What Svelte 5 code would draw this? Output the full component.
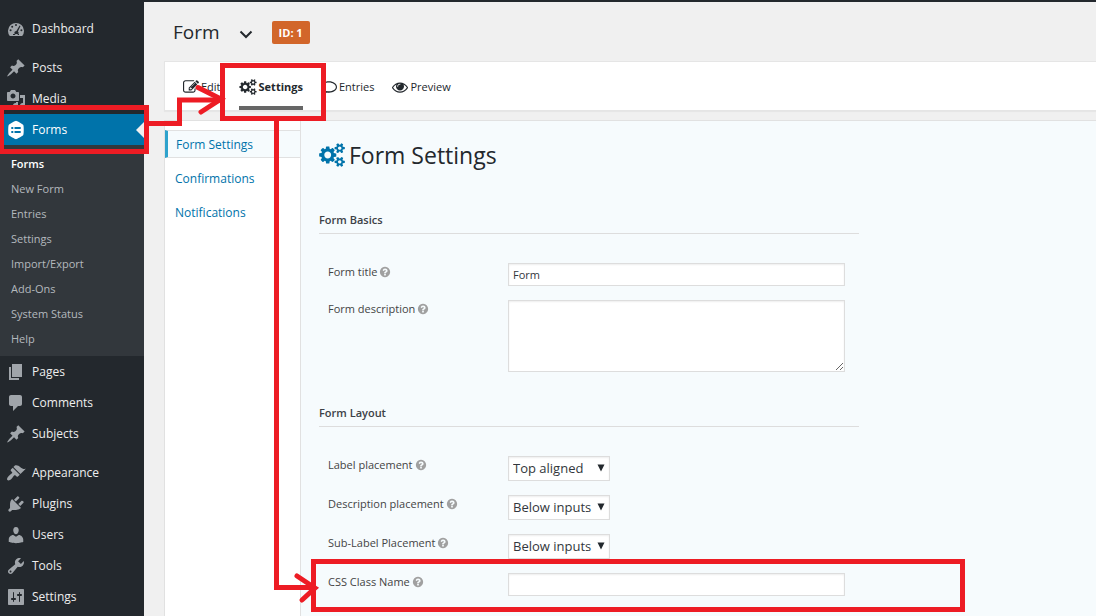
<script>
  const dash = {
    dashboard: 'M3.8 17h12.4A8 8 0 1 0 3.8 17zM10 5a1 1 0 1 1 0 2 1 1 0 0 1 0-2zM6.2 6.7a1 1 0 1 1 0 2 1 1 0 0 1 0-2zM4.6 10.3a1 1 0 1 1 0 2 1 1 0 0 1 0-2zM15.4 10.3a1 1 0 1 1 0 2 1 1 0 0 1 0-2zM13.6 6.4l.9.5-2.6 5.6a2 2 0 1 1-1.5-.6zM7 15h6v.9H7z',
    pin: 'M10.44 3.02l1.82-1.82 6.36 6.35-1.83 1.82c-1.05-.68-2.48-.57-3.41.36l-.75.75c-.92.93-1.04 2.35-.35 3.41l-1.83 1.82-2.41-2.41-2.8 2.79c-.42.42-3.38 2.71-3.8 2.29s1.86-3.39 2.28-3.81l2.79-2.79L4.1 9.36l1.83-1.82c1.05.69 2.48.57 3.4-.36l.75-.75c.93-.92 1.05-2.35.36-3.41z',
    media: 'M13 11V4c0-.55-.45-1-1-1h-1.67L9 1H5L3.67 3H2c-.55 0-1 .45-1 1v7c0 .55.45 1 1 1h10c.55 0 1-.45 1-1zM7 4.5c1.38 0 2.5 1.12 2.5 2.5S8.38 9.5 7 9.5 4.5 8.38 4.5 7 5.62 4.5 7 4.5zM14 6h5v10.5c0 1.38-1.12 2.5-2.5 2.5S14 17.88 14 16.5s1.12-2.5 2.5-2.5c.17 0 .34.02.5.05V9h-3V6zm-4 8.05V13h2v3.5c0 1.38-1.12 2.5-2.5 2.5S7 17.88 7 16.5 8.12 14 9.5 14c.17 0 .34.02.5.05z',
    forms: 'M10 .8c.6 0 6.8 3.4 7.3 4.2.6.9.6 9.1 0 10-.5.8-6.7 4.2-7.3 4.2s-6.8-3.4-7.3-4.2c-.6-.9-.6-9.1 0-10C3.2 4.2 9.4.8 10 .8zM5.3 7v2h2V7zm3.2 0v2h6.2V7zM5.3 11v2h2v-2zm3.2 0v2h6.2v-2z',
    pages: 'M6 15V2h10v13H6zm-1 1h8v2H3V5h2v11z',
    comments: 'M5 2h9c1.1 0 2 .9 2 2v7c0 1.1-.9 2-2 2h-2l-5 5v-5H5c-1.1 0-2-.9-2-2V4c0-1.1.9-2 2-2z',
    brush: 'M14.48 11.06L7.41 3.99l1.5-1.5c.5-.56 2.3-.47 3.51.32 1.21.8 1.43 1.28 2.91 2.1 1.18.64 2.45 1.26 4.45.85zm-.71.71L6.7 4.7 4.93 6.47c-.39.39-.39 1.02 0 1.41l1.06 1.06c.39.39.39 1.03 0 1.42-.6.6-1.43 1.11-2.21 1.69-.35.26-.7.53-1.01.84C1.43 14.23.4 16.08 1.4 17.07c.99 1 2.84-.03 4.18-1.36.31-.31.58-.66.85-1.02.57-.78 1.08-1.61 1.69-2.21.39-.39 1.02-.39 1.41 0l1.06 1.06c.39.39 1.02.39 1.41 0z',
    plug: 'M13.11 4.36L9.87 7.6 8 5.73l3.24-3.24c.35-.34 1.05-.2 1.56.32.52.51.66 1.21.31 1.55zm-8 1.77l.91-1.12 9.01 9.01-1.19.84c-.71.71-2.63 1.16-3.82 1.16H6.14L4.9 17.26c-.59.59-1.54.59-2.12 0-.59-.58-.59-1.53 0-2.12l1.24-1.24v-3.88c0-1.13.4-3.19 1.09-3.89zm7.26 3.97l3.24-3.24c.34-.35 1.04-.21 1.55.31.52.51.66 1.21.31 1.55l-3.24 3.25z',
    user: 'M10 9.25c-2.27 0-2.73-3.44-2.73-3.44C7 4.02 7.82 2 9.97 2c2.16 0 2.98 2.02 2.71 3.81 0 0-.41 3.44-2.68 3.44zm0 2.57L12.72 10c2.39 0 4.52 2.33 4.52 4.53v2.49s-3.65 1.13-7.24 1.13c-3.65 0-7.24-1.13-7.24-1.13v-2.49c0-2.25 1.94-4.48 4.47-4.48z',
    wrench: 'M16.68 9.77c-1.34 1.34-3.3 1.67-4.95.99l-5.41 6.52c-.99.99-2.59.99-3.58 0s-.99-2.59 0-3.57l6.52-5.42c-.68-1.65-.35-3.61.99-4.95 1.28-1.28 3.12-1.62 4.72-1.06l-2.89 2.89 2.82 2.82 2.86-2.87c.53 1.58.18 3.39-1.08 4.65zM3.81 16.21c.4.39 1.04.39 1.43 0 .4-.4.4-1.04 0-1.43-.39-.4-1.03-.4-1.43 0-.39.39-.39 1.03 0 1.43z',
    sliders: 'M18 17V3c0-.6-.4-1-1-1H3c-.6 0-1 .4-1 1v14c0 .6.4 1 1 1h14c.6 0 1-.4 1-1zM8 11h1c.55 0 1 .45 1 1s-.45 1-1 1H8v1.5c0 .28-.22.5-.5.5s-.5-.22-.5-.5V13H6c-.55 0-1-.45-1-1s.45-1 1-1h1V5.5c0-.28.22-.5.5-.5s.5.22.5.5V11zm5-2h-1c-.55 0-1-.45-1-1s.45-1 1-1h1V5.5c0-.28.22-.5.5-.5s.5.22.5.5V7h1c.55 0 1 .45 1 1s-.45 1-1 1h-1v5.5c0 .28-.22.5-.5.5s-.5-.22-.5-.5V9z'
  };

  const cogs =
    'M896 896q0-106-75-181t-181-75-181 75-75 181 75 181 181 75 181-75 75-181zm768 512q0-52-38-90t-90-38-90 38-38 90q0 53 37.5 90.5t90.5 37.5 90.5-37.5 37.5-90.5zm0-1024q0-52-38-90t-90-38-90 38-38 90q0 53 37.5 90.5t90.5 37.5 90.5-37.5 37.5-90.5zm-384 421v185q0 10-7 19.5t-16 10.5l-155 24q-11 35-32 76 34 48 90 115 7 11 7 20 0 12-7 19-23 30-82.5 89.5t-78.5 59.5q-11 0-21-7l-115-90q-37 19-77 31-11 108-23 155-7 24-30 24h-186q-11 0-20-7.5t-10-17.5l-23-153q-34-10-75-31l-118 89q-7 7-20 7-11 0-21-8-144-133-144-160 0-9 7-19 10-14 41-53t47-61q-23-44-35-82l-152-24q-10-1-17-9.5t-7-19.5v-185q0-10 7-19.5t16-10.5l155-24q11-35 32-76-34-48-90-115-7-11-7-20 0-12 7-20 22-30 82-89t79-59q11 0 21 7l115 90q34-18 77-32 11-108 23-154 7-24 30-24h186q11 0 20 7.5t10 17.5l23 153q34 10 75 31l118-89q8-7 20-7 11 0 21 8 144 133 144 160 0 8-7 19-12 16-42 54t-45 60q23 48 34 82l152 23q10 2 17 10.5t7 19.5zm640 533v140q0 16-149 31-12 27-30 52 51 113 51 138 0 4-4 7-122 71-124 71-8 0-46-47t-52-68q-20 2-30 2t-30-2q-14 21-52 68t-46 47q-2 0-124-71-4-3-4-7 0-25 51-138-18-25-30-52-149-15-149-31v-140q0-16 149-31 13-29 30-52-51-113-51-138 0-4 4-7 4-2 35-20t59-34 30-16q8 0 46 46.5t52 67.5q20-2 30-2t30 2q51-71 92-112l6-2q4 0 124 70 4 3 4 7 0 25-51 138 17 23 30 52 149 15 149 31zm0-1024v140q0 16-149 31-12 27-30 52 51 113 51 138 0 4-4 7-122 71-124 71-8 0-46-47t-52-68q-20 2-30 2t-30-2q-14 21-52 68t-46 47q-2 0-124-71-4-3-4-7 0-25 51-138-18-25-30-52-149-15-149-31v-140q0-16 149-31 13-29 30-52-51-113-51-138 0-4 4-7 4-2 35-20t59-34 30-16q8 0 46 46.5t52 67.5q20-2 30-2t30 2q51-71 92-112l6-2q4 0 124 70 4 3 4 7 0 25-51 138 17 23 30 52 149 15 149 31z';

  const tabIcons = {
    edit: 'M888 1184l116-116-152-152-116 116v56h96v96h56zm440-720q-16-16-33 1l-350 350q-17 17-1 33t33-1l350-350q17-17 1-33zm80 594v190q0 119-84.5 203.5t-203.5 84.5h-832q-119 0-203.5-84.5t-84.5-203.5v-832q0-119 84.5-203.5t203.5-84.5h832q63 0 117 25 15 7 18 23 3 17-9 29l-49 49q-14 14-32 8-23-6-45-6h-832q-66 0-113 47t-47 113v832q0 66 47 113t113 47h832q66 0 113-47t47-113v-126q0-13 9-22l64-64q15-15 35-7t20 29zm-96-738l288 288-672 672h-288v-288zm444 132l-92 92-288-288 92-92q28-28 68-28t68 28l152 152q28 28 28 68t-28 68z',
    cogs,
    comment: 'M896 384C470 384 128 600 128 896c0 150 90 285 240 380-10 90-50 170-120 240 150-30 270-90 370-170 88 20 180 30 278 30 426 0 768-216 768-480S1322 384 896 384zm0-128c495 0 896 287 896 640s-401 640-896 640c-82 0-162-8-238-22-165 120-340 170-520 190 90-110 140-200 150-310C105 1275 0 1095 0 896c0-353 401-640 896-640z',
    eye: 'M1664 960q-152-236-381-353 61 104 61 225 0 185-131.5 316.5t-316.5 131.5-316.5-131.5-131.5-316.5q0-121 61-225-229 117-381 353 133 205 333.5 326.5t434.5 121.5 434.5-121.5 333.5-326.5zm-720-384q0-20-14-34t-34-14q-125 0-214.5 89.5t-89.5 214.5q0 20 14 34t34 14 34-14 14-34q0-86 61-147t147-61q20 0 34-14t14-34zm848 384q0 34-20 69-140 230-376.5 368.5t-499.5 138.5-499.5-139-376.5-368q-20-35-20-69t20-69q140-229 376.5-368t499.5-139 499.5 139 376.5 368q20 35 20 69z'
  };

  const help =
    'M1024 1376v-192q0-14-9-23t-23-9h-192q-14 0-23 9t-9 23v192q0 14 9 23t23 9h192q14 0 23-9t9-23zm256-672q0-88-55.5-163t-138.5-116-170-41q-243 0-371 213-15 24 8 42l132 100q7 6 19 6 16 0 25-12 53-68 86-92 34-24 86-24 48 0 85.5 26t37.5 59q0 38-20 61t-68 45q-63 28-115.5 86.5t-52.5 125.5v36q0 14 9 23t23 9h192q14 0 23-9t9-23q0-19 21.5-49.5t54.5-49.5q32-18 49-28.5t46-35 44.5-48 28-60.5 12.5-81zm384 192q0 209-103 385.5t-279.5 279.5-385.5 103-385.5-103-279.5-279.5-103-385.5 103-385.5 279.5-279.5 385.5-103 385.5 103 279.5 279.5 103 385.5z';

  const groups = [
    [{ label: 'Dashboard', icon: 'dashboard' }],
    [
      { label: 'Posts', icon: 'pin' },
      { label: 'Media', icon: 'media' },
      {
        label: 'Forms',
        icon: 'forms',
        children: ['Forms', 'New Form', 'Entries', 'Settings', 'Import/Export', 'Add-Ons', 'System Status', 'Help']
      },
      { label: 'Pages', icon: 'pages' },
      { label: 'Comments', icon: 'comments' },
      { label: 'Subjects', icon: 'pin' }
    ],
    [
      { label: 'Appearance', icon: 'brush' },
      { label: 'Plugins', icon: 'plug' },
      { label: 'Users', icon: 'user' },
      { label: 'Tools', icon: 'wrench' },
      { label: 'Settings', icon: 'sliders' }
    ]
  ];

  const tabs = [
    { label: 'Edit', icon: 'edit' },
    { label: 'Settings', icon: 'cogs', active: true },
    { label: 'Entries', icon: 'comment' },
    { label: 'Preview', icon: 'eye' }
  ];

  const sections = ['Form Settings', 'Confirmations', 'Notifications'];

  const placements = [
    { id: 'label-placement', label: 'Label placement', options: ['Top aligned', 'Left aligned'] },
    { id: 'description-placement', label: 'Description placement', options: ['Below inputs', 'Above inputs'] },
    { id: 'sublabel-placement', label: 'Sub-Label Placement', options: ['Below inputs', 'Above inputs'] }
  ];

  let title = $state('Form');
  let description = $state('');
  let cssClass = $state('');
</script>

{#snippet fieldLabel(id, text)}
  <label for={id}>
    {text}
    <svg viewBox="0 0 1792 1792" aria-hidden="true"><path d={help} /></svg>
  </label>
{/snippet}

<div class="page">
  <nav class="sidebar" aria-label="Main menu">
    {#each groups as group}
      <ul>
        {#each group as item}
          <li>
            <a class="item" class:current={item.children} href="#top">
              <svg viewBox="0 0 20 20" aria-hidden="true"><path fill-rule="evenodd" d={dash[item.icon]} /></svg>
              {item.label}
            </a>
            {#if item.children}
              <ul class="submenu">
                {#each item.children as child, i}
                  <li><a href="#top" class:chosen={i === 0}>{child}</a></li>
                {/each}
              </ul>
            {/if}
          </li>
        {/each}
      </ul>
    {/each}
  </nav>

  <main>
    <header>
      <h1>Form</h1>
      <button class="switcher" aria-label="Switch form">
        <svg viewBox="0 0 14 9" aria-hidden="true"><path d="M1.5 1.5 7 7l5.500-5.500" /></svg>
      </button>
      <span class="badge">ID: 1</span>
    </header>

    <nav class="toolbar" aria-label="Form">
      {#each tabs as tab}
        <a href="#top" class:active={tab.active}>
          <svg class:wide={tab.icon === 'cogs'} viewBox={tab.icon === 'cogs' ? '0 0 1920 1792' : '0 0 1792 1792'} aria-hidden="true">
            <path d={tabIcons[tab.icon]} fill-rule={tab.icon === 'comment' ? 'evenodd' : 'nonzero'} />
          </svg>
          {tab.label}
        </a>
      {/each}
    </nav>

    <div class="panel">
      <nav class="sections" aria-label="Form settings">
        {#each sections as name, i}
          <a href="#top" class:active={i === 0}>{name}</a>
        {/each}
      </nav>

      <form class="settings">
        <h2>
          <svg viewBox="0 0 1920 1792" aria-hidden="true"><path d={cogs} /></svg>
          Form Settings
        </h2>

        <section>
          <h3>Form Basics</h3>
          <div class="row">
            {@render fieldLabel('form-title', 'Form title')}
            <input id="form-title" type="text" bind:value={title} />
          </div>
          <div class="row">
            {@render fieldLabel('form-description', 'Form description')}
            <textarea id="form-description" bind:value={description}></textarea>
          </div>
        </section>

        <section>
          <h3>Form Layout</h3>
          {#each placements as field}
            <div class="row">
              {@render fieldLabel(field.id, field.label)}
              <div class="select">
                <select id={field.id}>
                  {#each field.options as option}
                    <option>{option}</option>
                  {/each}
                </select>
                <svg viewBox="0 0 8 8" aria-hidden="true"><path d="M.5.5h7L4 7.500z" /></svg>
              </div>
            </div>
          {/each}
          <div class="row">
            {@render fieldLabel('css-class', 'CSS Class Name')}
            <input id="css-class" type="text" bind:value={cssClass} />
          </div>
        </section>
      </form>
    </div>
  </main>

  <!-- Walkthrough marks: menu item, then tab, then field -->
  <svg class="marks" width="1096" height="616" viewBox="0 0 1096 616" aria-hidden="true">
    <rect x="1.5" y="107.5" width="145" height="44" />
    <path d="M147 123.500h32.500V100H220" />
    <path d="M198 87.500 221 99l-20 13" stroke-linecap="round" />
    <rect x="222.5" y="65.5" width="101" height="53" />
    <path d="M276.500 116v471.500H313" />
    <path d="M297 576l18 12-13 12" stroke-linecap="round" />
    <rect x="313.5" y="561.5" width="649" height="48" />
  </svg>
</div>

<style>
  :global(body) {
    margin: 0;
    background: #f0f0f0;
  }

  .page {
    position: relative;
    display: flex;
    min-height: 100vh;
    color: #23282d;
    font: 11px/18px "Open Sans", "Noto Sans", sans-serif;
  }

  ul {
    margin: 0;
    padding: 0;
    list-style: none;
  }

  a {
    text-decoration: none;
  }

  .sidebar {
    flex: 0 0 144px;
    display: flex;
    flex-direction: column;
    gap: 8px;
    padding-top: 13px;
    background: #23282d;
  }

  .item {
    position: relative;
    display: flex;
    align-items: center;
    gap: 6px;
    height: 31px;
    padding-left: 6px;
    color: #eee;
    font-size: 12px;
  }

  .item svg {
    width: 20px;
    height: 20px;
    fill: #a0a5aa;
  }

  .item.current {
    background: #0073aa;
    color: #fff;
  }

  .item.current svg {
    fill: #fff;
  }

  .item.current::after {
    content: "";
    position: absolute;
    right: 0;
    top: 8px;
    border: 8px solid transparent;
    border-right-color: #f0f0f0;
    border-left: 0;
  }

  .submenu {
    padding: 6px 0 5px;
    background: #32373c;
  }

  .submenu a {
    display: block;
    padding-left: 11px;
    color: #b4b9be;
    line-height: 25px;
  }

  .submenu .chosen {
    color: #fff;
    font-weight: 600;
  }

  main {
    flex: 1;
    min-width: 0;
    display: flex;
    flex-direction: column;
    padding-left: 20px;
    border-top: 2px solid #23282d;
    background: #f0f0f0;
  }

  header {
    display: flex;
    align-items: center;
    padding: 18px 9px 16px;
  }

  h1 {
    margin: 0;
    font-size: 19px;
    font-weight: 400;
    line-height: 25px;
  }

  .switcher {
    display: flex;
    margin: 0 19px;
    padding: 3px 0 0;
    border: 0;
    background: none;
  }

  .switcher svg {
    width: 14px;
    height: 9px;
    fill: none;
    stroke: #23282d;
    stroke-width: 2;
  }

  .badge {
    padding: 0 7px;
    border-radius: 2px;
    background: #d2662a;
    color: #fff;
    font-weight: 700;
    line-height: 23px;
  }

  .toolbar {
    display: flex;
    gap: 18px;
    padding-left: 18px;
    border: 1px solid #e5e5e5;
    border-right: 0;
    background: #fff;
    box-shadow: 0 1px 1px #0000000a;
  }

  .toolbar a {
    display: flex;
    align-items: center;
    gap: 2px;
    padding: 16px 0 10px;
    border-bottom: 4px solid transparent;
    color: #23282d;
  }

  .toolbar .active {
    border-color: #666;
    font-weight: 700;
  }

  .toolbar svg {
    width: 16px;
    height: 16px;
    fill: #23282d;
  }

  .toolbar .wide {
    width: 18px;
  }

  .panel {
    flex: 1;
    display: flex;
    margin-top: 9px;
    border: 1px solid #e1e1e1;
    border-width: 1px 0 0 1px;
    background: #f6fbfd;
  }

  .sections {
    flex: 0 0 135px;
    display: flex;
    flex-direction: column;
    gap: 6px;
    padding-top: 9px;
    border-right: 1px solid #e1e1e1;
    background: #fff;
  }

  .sections a {
    padding: 5px 10px 3px;
    border: 1px solid transparent;
    border-width: 1px 0;
    color: #0073aa;
    font-size: 12px;
  }

  .sections .active {
    padding-left: 8px;
    border-color: #e1e1e1;
    border-left: 3px solid #2ea2cc;
    background: #f6fbfd;
  }

  .settings {
    flex: 1;
    min-width: 0;
    padding: 18px 18px 0;
  }

  h2 {
    display: flex;
    align-items: center;
    gap: 4px;
    margin: 0 0 40px;
    font-size: 23px;
    font-weight: 400;
    line-height: 32px;
  }

  h2 svg {
    width: 26px;
    height: 24px;
    fill: #0073aa;
  }

  section {
    display: flex;
    flex-direction: column;
    gap: 14px;
    max-width: 540px;
    margin-bottom: 32px;
  }

  section:last-child {
    margin-bottom: 0;
  }

  h3 {
    margin: 0 0 15px;
    padding-bottom: 4px;
    border-bottom: 1px solid #ddd;
    color: #3c4146;
    font-size: 11px;
    font-weight: 600;
  }

  .row {
    display: grid;
    grid-template-columns: 180px minmax(0, 337px);
    align-items: start;
    padding-left: 9px;
  }

  label {
    display: flex;
    align-items: center;
    gap: 2px;
    color: #444;
  }

  label svg {
    width: 12px;
    height: 12px;
    fill: #a0a0a0;
  }

  input,
  textarea,
  select {
    box-sizing: border-box;
    width: 100%;
    border: 1px solid #ddd;
    border-radius: 0;
    background: #fff;
    box-shadow: inset 0 1px 2px #00000012;
    color: #32373c;
    font: inherit;
    outline: 0;
  }

  input {
    height: 23px;
    padding: 0 4px;
  }

  textarea {
    display: block;
    height: 72px;
    padding: 2px 4px;
    resize: both;
  }

  .select {
    position: relative;
    justify-self: start;
    min-width: 102px;
  }

  .select svg {
    position: absolute;
    right: 5px;
    top: 8px;
    width: 8px;
    height: 8px;
    pointer-events: none;
    fill: #23282d;
  }

  select {
    display: block;
    height: 25px;
    padding: 0 16px 2px 4px;
    appearance: none;
    font-size: 13px;
  }

  .marks {
    position: absolute;
    left: 0;
    top: 0;
    fill: none;
    stroke: #ed1c24;
    stroke-width: 5;
    pointer-events: none;
  }
</style>
